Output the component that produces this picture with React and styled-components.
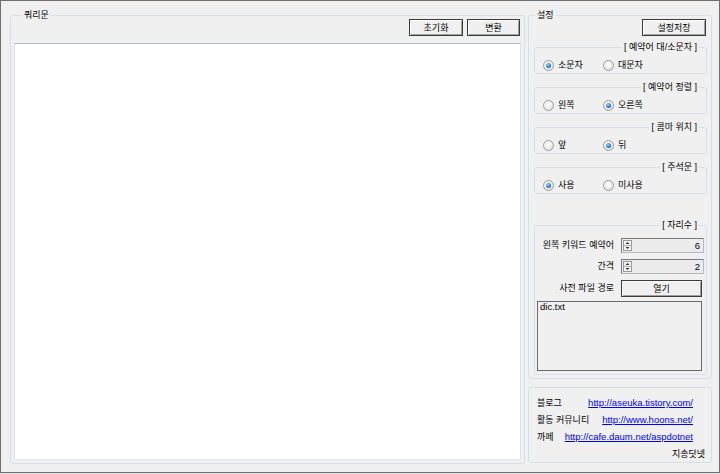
import styled, { createGlobalStyle } from "styled-components";

const GlobalStyle = createGlobalStyle`
  html, body {
    margin: 0;
    padding: 0;
    background: #dfe4ea;
  }
  body {
    font-family: "Liberation Sans", "Noto Sans CJK KR", sans-serif;
    font-size: 9px;
    color: #000;
  }
  * {
    box-sizing: border-box;
  }
`;

const Window = styled.div`
  width: 720px;
  height: 473px;
  background: #f0f0f0;
  border: 1px solid #6f6f6f;
  display: flex;
  gap: 3px;
  padding: 8px 7px 8px 9px;
`;

const Group = styled.fieldset`
  margin: 0;
  min-width: 0;
  border: 1px solid #d5dfe5;
  border-radius: 3px;
  display: flex;
  flex-direction: column;
`;

const Legend = styled.legend`
  padding: 0 2px;
  line-height: 12px;
  height: 12px;
  font-size: 9px;
  margin-left: ${(p) => (p.$right ? "auto" : `${p.$left || 0}px`)};
  margin-right: ${(p) => (p.$right ? "7px" : "0")};
  white-space: pre;
`;

const QueryGroup = styled(Group)`
  width: 515px;
  padding: 0 3px 3px 3px;
`;

const ButtonRow = styled.div`
  display: flex;
  justify-content: flex-end;
  gap: 4px;
  margin: -2px 1px 0 0;
`;

const Button = styled.button`
  height: 17px;
  width: ${(p) => p.$w}px;
  padding: 0;
  margin: 0;
  font: inherit;
  font-size: 9px;
  color: #000;
  background: #f0f0f0;
  border: 1px solid #3a3a3a;
  border-radius: 0;
  box-shadow: inset 1px 1px 0 #ffffff, inset -1px -1px 0 #a0a0a0;
  flex: none;
`;

const QueryArea = styled.textarea`
  flex: 1;
  margin-top: 7px;
  width: 100%;
  resize: none;
  outline: none;
  background: #fff;
  border: 1px solid;
  border-color: #abb7c6 #dbe3eb #e3e9ef #dbe3eb;
  padding: 2px;
  font: inherit;
`;

const Side = styled.div`
  width: 184px;
  display: flex;
  flex-direction: column;
  gap: 8px;
`;

const SettingsGroup = styled(Group)`
  padding: 0 4px 3px 5px;
`;

const SaveRow = styled.div`
  display: flex;
  justify-content: flex-end;
  margin: -2px 1px 0 0;
`;

const SubGroup = styled(Group)`
  padding: 0;
  margin-top: ${(p) => p.$gap}px;
`;

const RadioRow = styled.div`
  display: flex;
  height: 14px;
  margin: 5px 0 1px 8px;
`;

const RadioItem = styled.label`
  width: 60px;
  display: flex;
  align-items: center;
  gap: 4px;
  line-height: 14px;
`;

const RadioDot = styled.span`
  width: 11px;
  height: 11px;
  border-radius: 50%;
  border: 1px solid #9a9a9a;
  background: radial-gradient(circle at 40% 35%, #ffffff 0%, #ececec 55%, #d6d6d6 100%);
  display: flex;
  align-items: center;
  justify-content: center;
  flex: none;

  &::after {
    content: "";
    display: ${(p) => (p.$on ? "block" : "none")};
    width: 5px;
    height: 5px;
    border-radius: 50%;
    background: radial-gradient(circle at 40% 35%, #9ad8ff 0%, #2a7fd4 55%, #0d3f86 100%);
  }
`;

const DigitGrid = styled.div`
  display: grid;
  grid-template-columns: 1fr 83px;
  column-gap: 5px;
  row-gap: 6px;
  align-items: center;
  padding: 7px 2px 3px 2px;
`;

const FieldLabel = styled.span`
  text-align: right;
  padding-right: 2px;
  line-height: 15px;
  white-space: nowrap;
`;

const Numeric = styled.div`
  height: 15px;
  display: flex;
  align-items: center;
  background: #ececec;
  border: 1px solid;
  border-color: #7a7a7a #b9b9b9 #b9b9b9 #7a7a7a;
  padding: 0 3px 0 1px;
  font-size: 9.5px;
`;

const NumValue = styled.span`
  flex: 1;
  text-align: right;
  line-height: 13px;
`;

const DicArea = styled.textarea`
  grid-column: 1 / -1;
  width: 165px;
  height: 70px;
  margin-top: -2px;
  resize: none;
  outline: none;
  background: #f0f0f0;
  border: 1px solid #6a6a6a;
  padding: 0 2px;
  font-family: "Liberation Sans", sans-serif;
  font-size: 9.5px;
  line-height: 10px;
  color: #000;
`;

const InfoGroup = styled(Group)`
  flex: 1;
  margin-bottom: 1px;
  padding: 6px 18px 0 8px;
`;

const InfoRow = styled.div`
  height: 17px;
  display: flex;
  align-items: center;
  justify-content: ${(p) => (p.$end ? "flex-end" : "space-between")};
  margin-right: ${(p) => (p.$end ? "-12px" : "0")};
`;

const Link = styled.a`
  color: #0000ff;
  text-decoration: underline;
  font-size: 9.5px;
`;

const Spinner = () => (
  <svg width="9" height="11" viewBox="0 0 9 11">
    <rect x="0.5" y="0.5" width="8" height="10" fill="#f4f4f4" stroke="#9a9a9a" />
    <line x1="1" y1="5.5" x2="8" y2="5.5" stroke="#b0b0b0" />
    <path d="M2.5 4 L4.5 2 L6.5 4 Z" fill="#333" />
    <path d="M2.5 7 L4.5 9 L6.5 7 Z" fill="#333" />
  </svg>
);

const radioGroups = [
  { title: "[ 예약어 대/소문자 ]", options: ["소문자", "대문자"], on: 0, gap: 5 },
  { title: "[ 예약어 정렬 ]", options: ["왼쪽", "오른쪽"], on: 1, gap: 7 },
  { title: "[ 콤마 위치 ]", options: ["앞", "뒤"], on: 1, gap: 7 },
  { title: "[ 주석문 ]", options: ["사용", "미사용"], on: 0, gap: 7 },
];

export default function App() {
  return (
    <>
      <GlobalStyle />
      <Window>
        <QueryGroup>
          <Legend $left={8}>쿼리문</Legend>
          <ButtonRow>
            <Button $w={54}>초기화</Button>
            <Button $w={53}>변환</Button>
          </ButtonRow>
          <QueryArea defaultValue="" />
        </QueryGroup>

        <Side>
          <SettingsGroup>
            <Legend $left={1}>설정</Legend>
            <SaveRow>
              <Button $w={64}>설정저장</Button>
            </SaveRow>

            {radioGroups.map((g) => (
              <SubGroup key={g.title} $gap={g.gap}>
                <Legend $right>{g.title}</Legend>
                <RadioRow>
                  {g.options.map((o, i) => (
                    <RadioItem key={o}>
                      <RadioDot $on={i === g.on} />
                      {o}
                    </RadioItem>
                  ))}
                </RadioRow>
              </SubGroup>
            ))}

            <SubGroup $gap={25}>
              <Legend $right>[ 자리수 ]</Legend>
              <DigitGrid>
                <FieldLabel>왼쪽 키워드 예약어</FieldLabel>
                <Numeric>
                  <Spinner />
                  <NumValue>6</NumValue>
                </Numeric>
                <FieldLabel>간격</FieldLabel>
                <Numeric>
                  <Spinner />
                  <NumValue>2</NumValue>
                </Numeric>
                <FieldLabel>사전 파일 경로</FieldLabel>
                <Button $w={81}>열기</Button>
                <DicArea defaultValue="dic.txt" />
              </DigitGrid>
            </SubGroup>
          </SettingsGroup>

          <InfoGroup>
            <InfoRow>
              <span>블로그</span>
              <Link href="#">http://aseuka.tistory.com/</Link>
            </InfoRow>
            <InfoRow>
              <span>활동 커뮤니티</span>
              <Link href="#">http://www.hoons.net/</Link>
            </InfoRow>
            <InfoRow>
              <span>까페</span>
              <Link href="#">http://cafe.daum.net/aspdotnet</Link>
            </InfoRow>
            <InfoRow $end>
              <span>지송닷넷</span>
            </InfoRow>
          </InfoGroup>
        </Side>
      </Window>
    </>
  );
}
